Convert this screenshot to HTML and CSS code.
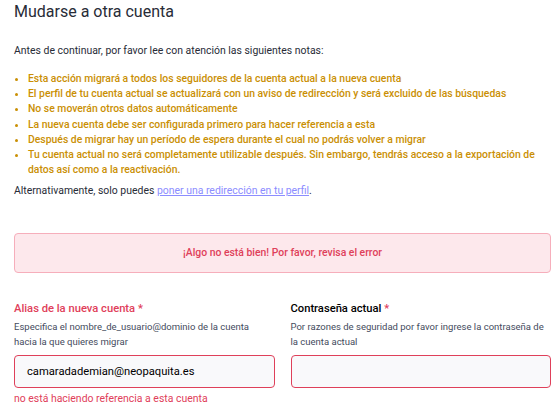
FILE: index.html
```html
<!DOCTYPE html>
<html lang="es">
<head>
<meta charset="utf-8">
<link rel="stylesheet" href="styles.css">
</head>
<body>
<div class="page">
  <h1 class="title">Mudarse a otra cuenta</h1>
  <p class="intro">Antes de continuar, por favor lee con atención las siguientes notas:</p>
  <ul class="notes">
    <li>Esta acción migrará a todos los seguidores de la cuenta actual a la nueva cuenta</li>
    <li>El perfil de tu cuenta actual se actualizará con un aviso de redirección y será excluido de las búsquedas</li>
    <li>No se moverán otros datos automáticamente</li>
    <li>La nueva cuenta debe ser configurada primero para hacer referencia a esta</li>
    <li>Después de migrar hay un período de espera durante el cual no podrás volver a migrar</li>
    <li>Tu cuenta actual no será completamente utilizable después. Sin embargo, tendrás acceso a la exportación de datos así como a la reactivación.</li>
  </ul>
  <p class="alt">Alternativamente, solo puedes <a href="#" class="link">poner una redirección en tu perfil</a>.</p>
  <div class="flash">¡Algo no está bien! Por favor, revisa el error</div>
  <div class="fields">
    <div class="field field-error">
      <label class="label">Alias de la nueva cuenta <abbr>*</abbr></label>
      <p class="hint">Especifica el nombre_de_usuario@dominio de la cuenta hacia la que quieres migrar</p>
      <div class="input">camaradademian@neopaquita.es</div>
      <p class="err">no está haciendo referencia a esta cuenta</p>
    </div>
    <div class="field">
      <label class="label">Contraseña actual <abbr>*</abbr></label>
      <p class="hint">Por razones de seguridad por favor ingrese la contraseña de la cuenta actual</p>
      <div class="input"></div>
    </div>
  </div>
</div>
</body>
</html>
```
FILE: styles.css
```css
html, body { margin: 0; padding: 0; background: #fff; }
body { font-family: Roboto, "Noto Sans", sans-serif; color: #282c37; }
.page { padding: 0 7px 0 14px; }
.title { font-size: 16px; font-weight: 400; margin: 0; padding-top: 1px; line-height: 22px; color: #282c37; }
.intro { font-size: 10.45px; margin: 20px 0 0; line-height: 15px; }
.notes { margin: 13px 0 0; padding: 0 0 0 14px; color: #ca8f04; font-size: 10.4px; font-weight: 500; line-height: 15.2px; }
.alt { font-size: 10.45px; margin: 6px 0 0; line-height: 15px; }
.link { color: #8c8dff; text-decoration: underline; }
.flash { margin-top: 34.5px; height: 38px; border: 1px solid #f6aebb; background: #fde8ec; border-radius: 4px; color: #df405a; font-size: 10.4px; font-weight: 500; display: flex; align-items: center; justify-content: center; }
.fields { display: grid; grid-template-columns: 1fr 1fr; column-gap: 16px; margin-top: 28px; }
.label { display: block; font-size: 11.2px; font-weight: 500; line-height: 16px; color: #000; }
.field-error .label { color: #df405a; }
.label abbr { color: #df405a; text-decoration: none; }
.hint { font-size: 9.5px; line-height: 15px; margin: 2.5px 0 0; padding-right: 4px; color: #444b5d; }
.input { margin-top: 5.5px; height: 31px; border: 1px solid #df405a; border-radius: 4px; background: #f9f9fb; font-size: 11.2px; line-height: 31px; padding: 0 12px; color: #000; }
.err { margin: 3.5px 0 0; font-size: 10.45px; line-height: 15px; color: #df405a; font-weight: 400; }
```
